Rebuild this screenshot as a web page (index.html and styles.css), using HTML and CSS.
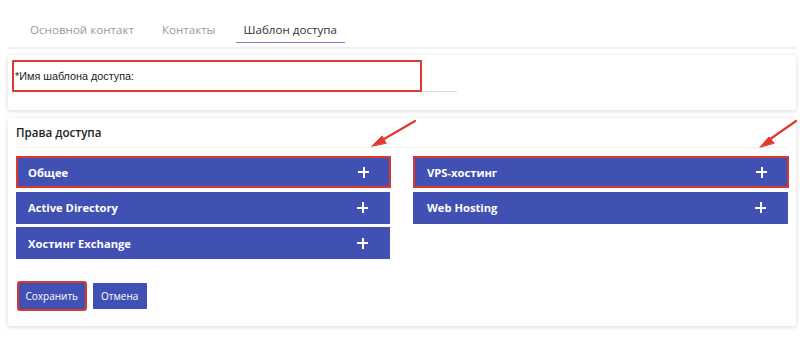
FILE: index.html
```html
<!DOCTYPE html>
<html lang="ru">
<head>
<meta charset="utf-8">
<link rel="stylesheet" href="styles.css">
</head>
<body>
<div class="page">
  <nav class="tabs">
    <span class="tab">Основной контакт</span>
    <span class="tab">Контакты</span>
    <span class="tab active">Шаблон доступа</span>
  </nav>
  <section class="card card-name">
    <div class="field">
      <span class="label">*Имя шаблона доступа:</span>
      <span class="mark mark-field"></span>
    </div>
  </section>
  <section class="card card-rights">
    <div class="card-head">Права доступа</div>
    <div class="cols">
      <div class="col">
        <div class="acc marked">Общее<span class="plus"></span></div>
        <div class="acc">Active Directory<span class="plus"></span></div>
        <div class="acc">Хостинг Exchange<span class="plus"></span></div>
      </div>
      <div class="col col-right">
        <div class="acc marked">VPS-хостинг<span class="plus"></span></div>
        <div class="acc">Web Hosting<span class="plus"></span></div>
      </div>
    </div>
    <div class="actions">
      <button class="btn marked-btn">Сохранить</button>
      <button class="btn">Отмена</button>
    </div>
  </section>
  <svg class="arrows" width="800" height="340" viewBox="0 0 800 340">
    <g stroke="#e03a2c" stroke-width="2.2" fill="#e03a2c" stroke-linecap="round">
      <line x1="415" y1="121" x2="379" y2="142"/>
      <polygon points="372,146 382,136 386,143" stroke-width="1"/>
      <line x1="796" y1="121" x2="766" y2="142"/>
      <polygon points="760,147 769,137 774,143" stroke-width="1"/>
    </g>
  </svg>
</div>
</body>
</html>
```

FILE: styles.css
```css
* { box-sizing: border-box; }
body {
  margin: 0;
  background: #ffffff;
  font-family: "Open Sans", "Noto Sans", "DejaVu Sans", sans-serif;
  color: #333;
}
.page {
  position: relative;
  width: 800px;
  height: 340px;
  padding: 16px 4px 0 8px;
}
.tabs {
  display: flex;
  gap: 12px;
  padding-left: 14px;
  height: 33px;
  border-bottom: 2px solid #f0f0f0;
  align-items: flex-start;
}
.tab {
  font-size: 11.6px;
  color: #9a9a9a;
  padding: 4px 8px 0;
  height: 27px;
  line-height: 19px;
}
.tab.active {
  color: #333;
  border-bottom: 1.5px solid #7b80c4;
}
.card {
  background: #fff;
  box-shadow: 0 1px 4px rgba(0,0,0,0.16);
  border-radius: 2px;
}
.card-name {
  margin-top: 6px;
  height: 55px;
  padding: 5px 4px;
}
.field {
  position: relative;
  width: 445px;
  height: 32px;
  border-bottom: 1px solid #dcdcdc;
  display: flex;
  align-items: center;
  padding-left: 3px;
  font-family: "Liberation Sans", "Noto Sans", sans-serif;
  font-size: 10.8px;
  color: #222;
}
.mark-field {
  position: absolute;
  left: 0;
  top: 0;
  width: 410px;
  height: 32px;
  border: 2px solid #d9392e;
  border-radius: 1px;
}
.card-rights {
  margin-top: 8px;
  height: 208px;
  padding: 0 8px;
}
.card-head {
  height: 30px;
  line-height: 30px;
  font-size: 11.6px;
  font-weight: 600;
  color: #222;
  border-bottom: 1px solid #f0f0f0;
}
.cols {
  display: grid;
  grid-template-columns: 374px 375px;
  column-gap: 23px;
  margin-top: 8px;
  align-items: start;
}
.col {
  display: flex;
  flex-direction: column;
  gap: 3.5px;
}
.acc {
  height: 32px;
  background: #4150b3;
  color: #fff;
  font-size: 11.2px;
  font-weight: 700;
  display: flex;
  align-items: center;
  justify-content: space-between;
  padding: 0 22px 0 12px;
}
.col-right .acc { padding-left: 14px; }
.acc.marked {
  box-shadow: inset 0 0 0 2px #d9392e;
  margin-right: -1px;
}
.plus {
  position: relative;
  width: 11px;
  height: 11px;
}
.plus::before, .plus::after {
  content: "";
  position: absolute;
  background: #fff;
}
.plus::before { left: 0; top: 4.5px; width: 11px; height: 2px; }
.plus::after { left: 4.5px; top: 0; width: 2px; height: 11px; }
.actions {
  display: flex;
  gap: 6px;
  margin-top: 22px;
  padding-left: 1px;
  align-items: center;
}
.btn {
  height: 26px;
  border: none;
  background: #4150b3;
  color: #fff;
  font-family: "Open Sans", "Noto Sans", sans-serif;
  font-size: 10px;
  padding: 0 8.5px;
  border-radius: 1px;
}
.marked-btn {
  height: 30px;
  border: 2px solid #d9392e;
  border-radius: 3px;
  padding: 0 6.5px;
}
.arrows {
  position: absolute;
  left: 0;
  top: 0;
  pointer-events: none;
}
```
